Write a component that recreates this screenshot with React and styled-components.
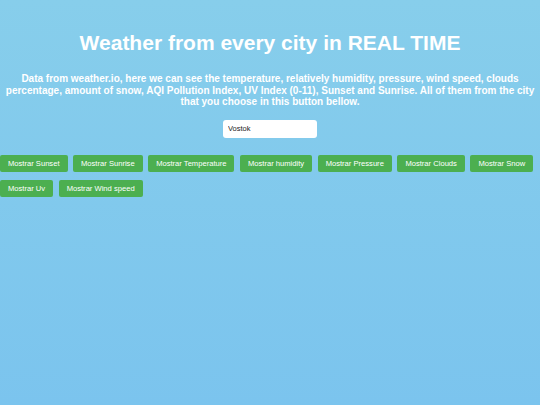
import React, { useState } from 'react'
import styled, { createGlobalStyle } from 'styled-components'

const GlobalStyle = createGlobalStyle`
  html, body {
    margin: 0;
    padding: 0;
    min-height: 100%;
  }
  body {
    font-family: "Liberation Sans", Arial, sans-serif;
    background: linear-gradient(to bottom, #87ceeb 0%, #7bc4ee 100%);
    min-height: 405px;
  }
`

const Page = styled.div`
  min-height: 405px;
  padding-top: 31px;
  box-sizing: border-box;
`

const Title = styled.h1`
  margin: 0;
  text-align: center;
  color: #ffffff;
  font-size: 21px;
  font-weight: 700;
  line-height: 24px;
`

const Intro = styled.p`
  margin: 18px 0 0;
  padding: 0 3px;
  text-align: center;
  color: #ffffff;
  font-size: 10px;
  font-weight: 700;
  line-height: 11.6px;
`

const SearchRow = styled.div`
  display: flex;
  justify-content: center;
  margin-top: 12px;
`

const CityInput = styled.input`
  width: 94px;
  height: 18px;
  box-sizing: border-box;
  border: none;
  border-radius: 3px;
  background: #ffffff;
  padding: 0 5px;
  font-family: "Liberation Sans", Arial, sans-serif;
  font-size: 7.5px;
  color: #222;
  outline: none;
`

const ButtonBar = styled.div`
  display: flex;
  flex-wrap: wrap;
  column-gap: 5.5px;
  row-gap: 8px;
  margin-top: 17px;
`

const ShowButton = styled.button`
  height: 17px;
  padding: 0 8px;
  border: none;
  border-radius: 2px;
  background: #4caf50;
  color: #ffffff;
  font-family: "Liberation Sans", Arial, sans-serif;
  font-size: 7.6px;
  cursor: pointer;
`

const labels = [
  'Sunset',
  'Sunrise',
  'Temperature',
  'humidity',
  'Pressure',
  'Clouds',
  'Snow',
  'Uv',
  'Wind speed',
]

export default function App() {
  const [city, setCity] = useState('Vostok')
  return (
    <>
      <GlobalStyle />
      <Page>
        <Title>Weather from every city in REAL TIME</Title>
        <Intro>
          Data from weather.io, here we can see the temperature, relatively humidity, pressure, wind speed, clouds
          percentage, amount of snow, AQI Pollution Index, UV Index (0-11), Sunset and Sunrise. All of them from the city
          that you choose in this button bellow.
        </Intro>
        <SearchRow>
          <CityInput value={city} onChange={(e) => setCity(e.target.value)} />
        </SearchRow>
        <ButtonBar>
          {labels.map((l) => (
            <ShowButton key={l}>Mostrar {l}</ShowButton>
          ))}
        </ButtonBar>
      </Page>
    </>
  )
}
